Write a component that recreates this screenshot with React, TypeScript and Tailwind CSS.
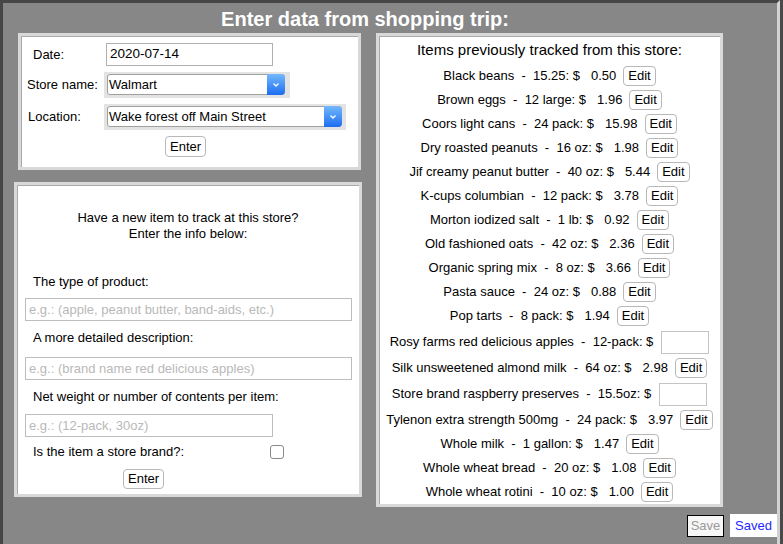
import React from 'react'

type Item = { name: string; size: string; price?: string }

const items: Item[] = [
  { name: 'Black beans', size: '15.25', price: '0.50' },
  { name: 'Brown eggs', size: '12 large', price: '1.96' },
  { name: 'Coors light cans', size: '24 pack', price: '15.98' },
  { name: 'Dry roasted peanuts', size: '16 oz', price: '1.98' },
  { name: 'Jif creamy peanut butter', size: '40 oz', price: '5.44' },
  { name: 'K-cups columbian', size: '12 pack', price: '3.78' },
  { name: 'Morton iodized salt', size: '1 lb', price: '0.92' },
  { name: 'Old fashioned oats', size: '42 oz', price: '2.36' },
  { name: 'Organic spring mix', size: '8 oz', price: '3.66' },
  { name: 'Pasta sauce', size: '24 oz', price: '0.88' },
  { name: 'Pop tarts', size: '8 pack', price: '1.94' },
  { name: 'Rosy farms red delicious apples', size: '12-pack' },
  { name: 'Silk unsweetened almond milk', size: '64 oz', price: '2.98' },
  { name: 'Store brand raspberry preserves', size: '15.5oz' },
  { name: 'Tylenon extra strength 500mg', size: '24 pack', price: '3.97' },
  { name: 'Whole milk', size: '1 gallon', price: '1.47' },
  { name: 'Whole wheat bread', size: '20 oz', price: '1.08' },
  { name: 'Whole wheat rotini', size: '10 oz', price: '1.00' },
]

const panel = 'bg-white border-[3px] border-[#d9d9d9] shadow-[inset_1px_1px_0_#a9a9a9]'

function SmallButton({ label, className = '' }: { label: string; className?: string }) {
  return (
    <div className={`h-[20px] px-[4px] flex items-center border border-[#b8b8b8] rounded-[4px] bg-white text-[13px] text-black ${className}`}>
      {label}
    </div>
  )
}

function FakeSelect({ value, outer, inner }: { value: string; outer: string; inner: string }) {
  return (
    <div className={`h-[26px] bg-[#e3e3e3] pl-[3px] pt-[2px] ${outer}`}>
      <div className={`h-[21px] flex border border-[#a0a0a0] bg-white rounded-[3px] ${inner}`}>
        <div className="flex-1 flex items-center pl-[1px] text-[13px] text-black">{value}</div>
        <div className="w-[18px] -my-px -mr-px rounded-r-[4px] bg-linear-to-b from-[#74b8fc] to-[#1a6cf0] flex items-center justify-center">
          <svg width="8" height="6" viewBox="0 0 8 6">
            <polyline points="1.5,1.5 4,4 6.5,1.5" fill="none" stroke="white" strokeWidth="1.4" />
          </svg>
        </div>
      </div>
    </div>
  )
}

function TextBox({ placeholder, className = '' }: { placeholder: string; className?: string }) {
  return (
    <div className={`h-[23px] ml-[8px] border border-[#bdbdbd] bg-white flex items-center pl-[3px] text-[13px] text-[#b9b9b9] ${className}`}>
      {placeholder}
    </div>
  )
}

export default function App() {
  return (
    <div className="w-[783px] h-[544px] overflow-hidden bg-[#4a4a4a]" style={{ fontFamily: '"Liberation Sans", Arial, sans-serif' }}>
      <div className="w-[780px] h-[600px] bg-[#878787] border-t-[3px] border-l-[3px] border-r-[3px] border-t-[#464646] border-l-[#464646] border-r-[#d2d2d2]">
        {/* Title */}
        <div className="w-[724px] h-[30px] pt-[1px] flex items-center justify-center text-white font-bold text-[20px]">
          Enter data from shopping trip:
        </div>

        <div className="flex">
          {/* Left column */}
          <div className="ml-[11px] w-[348px] flex flex-col gap-[12px]">
            {/* Store info */}
            <div className={`ml-[4px] w-[343px] h-[137px] ${panel} pt-[7px] text-[13px] text-black`}>
              <div className="flex items-center">
                <div className="pl-[12px] w-[85px]">Date:</div>
                <div className="w-[167px] h-[23px] border border-[#b0b0b0] flex items-center pl-[3px] text-[13.5px]">2020-07-14</div>
              </div>
              <div className="flex items-center mt-[6px]">
                <div className="pl-[6px] w-[83px]">Store name:</div>
                <FakeSelect value="Walmart" outer="w-[186px]" inner="w-[178px]" />
              </div>
              <div className="flex items-center mt-[6px]">
                <div className="pl-[7px] w-[83px]">Location:</div>
                <FakeSelect value="Wake forest off Main Street" outer="w-[242px]" inner="w-[235px]" />
              </div>
              <div className="mt-[6px] flex">
                <SmallButton label="Enter" className="ml-[144px] h-[21px]" />
              </div>
            </div>

            {/* New item */}
            <div className={`w-[348px] h-[315px] ${panel} pt-[25px] text-[13px] text-black`}>
              <div className="text-center leading-[16px]">
                <div>Have a new item to track at this store?</div>
                <div>Enter the info below:</div>
              </div>
              <div className="mt-[32px] pl-[16px] leading-[16px]">The type of product:</div>
              <TextBox className="mt-[8px] w-[327px]" placeholder="e.g.: (apple, peanut butter, band-aids, etc.)" />
              <div className="mt-[9px] pl-[16px] leading-[16px]">A more detailed description:</div>
              <TextBox className="mt-[11px] w-[327px]" placeholder="e.g.: (brand name red delicious apples)" />
              <div className="mt-[9px] pl-[16px] leading-[16px]">Net weight or number of contents per item:</div>
              <TextBox className="mt-[9px] w-[248px]" placeholder="e.g.: (12-pack, 30oz)" />
              <div className="mt-[7px] flex items-center h-[16px]">
                <div className="pl-[16px] w-[253px]">Is the item a store brand?:</div>
                <div className="w-[14px] h-[14px] border border-[#8a8a8a] rounded-[3px] bg-white" />
              </div>
              <div className="mt-[9px] flex">
                <SmallButton label="Enter" className="ml-[106px]" />
              </div>
            </div>
          </div>

          {/* Right panel */}
          <div className={`ml-[14px] w-[347px] h-[474px] ${panel} pt-[1px] text-[13px] text-black`}>
            <div className="h-[27px] flex items-center justify-center text-[15px]">
              Items previously tracked from this store:
            </div>
            {items.map((it) => (
              <div key={it.name} className={`flex items-center justify-center ${it.price ? 'h-[24px]' : 'h-[28px]'}`}>
                <span className="whitespace-pre">{`${it.name}  -  ${it.size}: $`}</span>
                {it.price ? (
                  <>
                    <span className="ml-[11px]">{it.price}</span>
                    <SmallButton label="Edit" className="ml-[7px]" />
                  </>
                ) : (
                  <div className="ml-[8px] w-[48px] h-[23px] border border-[#c4c4c4] bg-white" />
                )}
              </div>
            ))}
          </div>
        </div>

        {/* Save row */}
        <div className="mt-[7px] flex justify-end items-center">
          <div className="h-[22px] w-[37px] border border-black bg-[#f7f7f7] flex items-center justify-center text-[13px] text-[#9a9a9a]">
            Save
          </div>
          <div className="ml-[6px] h-[23px] w-[47px] bg-white flex items-center justify-center text-[13px] text-[#1f1fff]">
            Saved
          </div>
        </div>
      </div>
    </div>
  )
}
